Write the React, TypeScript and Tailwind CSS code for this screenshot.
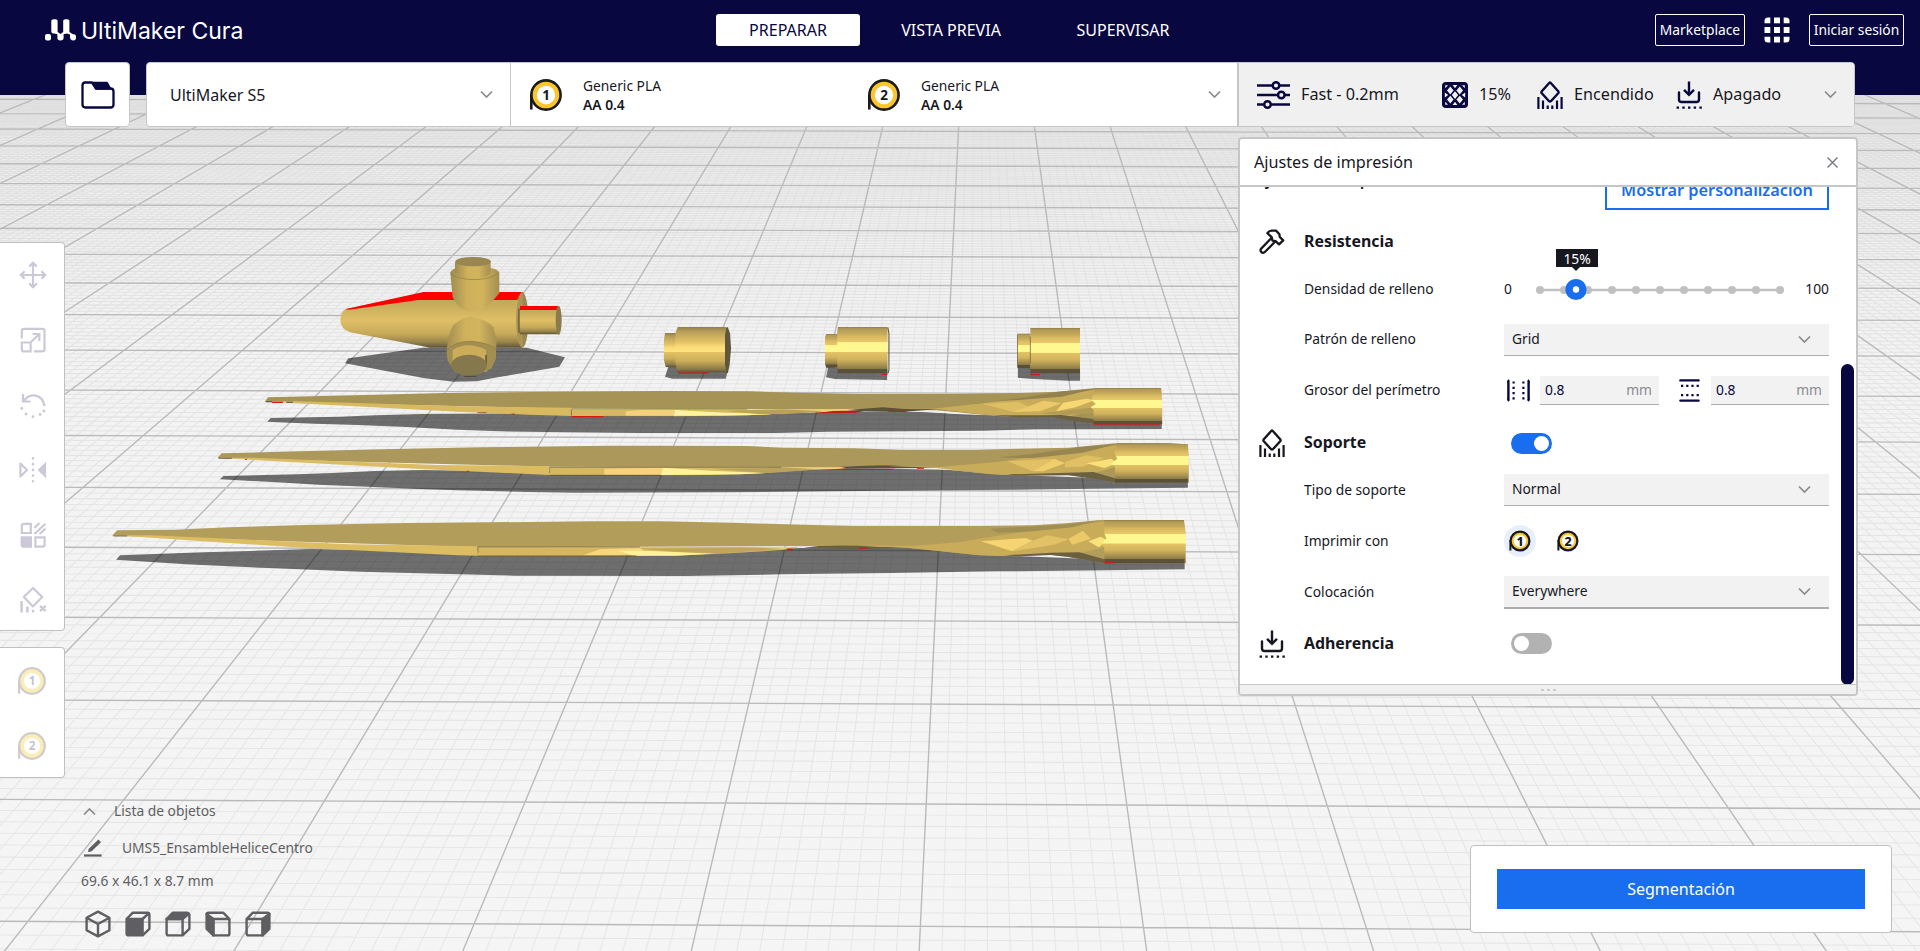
import type { ReactNode } from 'react';

/* ---------- Build plate ---------- */

const HORIZON = -285;

function platePoint(col: number, row: number): [number, number] {
  const depth = 1 / (0.00082556 + 0.00009273 * row);
  const y0 = HORIZON + depth;
  const xc = 958.6 - 0.0478 * (y0 - 127);
  const x = xc + col * 0.1842 * depth;
  const y = y0 + (x - xc) * (0.0019 + 0.0000038 * y0);
  return [x, y];
}

function seg(a: [number, number], b: [number, number]) {
  return `M${a[0].toFixed(1)} ${a[1].toFixed(1)}L${b[0].toFixed(1)} ${b[1].toFixed(1)}`;
}

function gridPath(step: number, skipMajor: boolean) {
  const parts: string[] = [];
  const cols = Math.round(17 / step);
  for (let i = -cols; i <= cols; i++) {
    if (skipMajor && i % 10 === 0) continue;
    const c = i * step;
    parts.push(seg(platePoint(c, 20), platePoint(c, -0.5)));
  }
  const from = Math.round(-0.5 / step);
  const to = Math.round(20 / step);
  for (let j = from; j <= to; j++) {
    if (skipMajor && j % 10 === 0) continue;
    const r = j * step;
    parts.push(seg(platePoint(-17, r), platePoint(17, r)));
  }
  return parts.join('');
}

const minorGrid = gridPath(0.1, true);
const majorGrid = gridPath(1, false);

function Hub() {
  return (
    <g transform="translate(320 240) scale(.33333)">
      <path d="M75 370L85 355L310 323H620L735 352L718 380L640 394L520 414L470 424L400 425L310 414Z" fill="rgba(0,0,0,.55)" />
      <path d="M310 158H606V323H330L305 318L90 277Q62 268 61 240Q62 212 80 206Z" fill="url(#hubBody)" />
      <path d="M75 208L310 156H610L600 180H295L88 209Z" fill="#ff0000" />
      <ellipse cx="607" cy="240" rx="18" ry="83" fill="#9a8650" />
      <path d="M590 180Q600 156 608 156V323Q600 322 592 300Z" fill="#ccb05b" opacity=".35" />
      <path d="M598 205V275L600 283H717V198H600Z" fill="url(#hubBody)" />
      <path d="M600 198H714L710 210H600Z" fill="#ff0000" />
      <ellipse cx="716" cy="241" rx="9" ry="43" fill="#8b7a4b" />
      <path d="M597 205V278" stroke="#4d4630" strokeWidth="3" />
      <path d="M391 100L398 172Q420 214 455 214Q492 212 520 180L538 160V98Q530 85 510 84H410Q392 88 391 100Z" fill="url(#hubNeck)" />
      <path d="M391 98Q410 119 465 119Q520 117 536 96" fill="none" stroke="#8d7a48" strokeWidth="2" />
      <path d="M405 66V100Q425 116 462 116Q500 115 512 98V62Z" fill="url(#hubNeck)" />
      <ellipse cx="459" cy="65" rx="53" ry="14" fill="#9a8651" />
      <path d="M380 335Q383 285 400 255Q430 230 455 230Q500 238 520 262L530 300L527 350L500 395L420 395L385 360Z" fill="url(#hubNeck)" />
      <path d="M380 335Q400 303 455 304Q515 310 528 330V355L515 385L490 395L440 400L400 386L383 362Z" fill="#a38e52" />
      <path d="M380 335Q400 303 455 304Q515 310 528 330" fill="none" stroke="#8d7a48" strokeWidth="2" />
      <path d="M398 330Q445 302 498 330V378H398Z" fill="#cbad59" />
      <path d="M498 345V378" stroke="#554a2c" strokeWidth="4" />
      <ellipse cx="447" cy="376" rx="54" ry="32" fill="#85784c" />
      <path d="M432 409H470" stroke="#4d4630" strokeWidth="3" />
    </g>
  );
}

function Caps() {
  return (
    <g>
      <g fill="rgba(0,0,0,.55)">
        <path d="M80 198L70 230L90 236H240L245 215Z" />
        <path d="M527 200L521 232L545 237L692 240V218Z" />
        <path d="M1058 200V233L1090 236L1200 242H1232V215Z" />
      </g>
      <path d="M70 99H104V201H72L67 180V120Z" fill="url(#rodSoft)" />
      <path d="M106 81H240L246 90V217H106L99 190V100Z" fill="url(#rodSoft)" />
      <path d="M242 82H246L252 100L255 145L251 195L246 219H242L238 195V105Z" fill="#5f563b" />
      <path d="M107 219H193" stroke="#c81f1f" strokeWidth="4" />
      <path d="M521 102H555V203H521L518 190V112Z" fill="url(#rod)" />
      <path d="M554 81H693V220H554L552 190V100Z" fill="url(#rod)" />
      <path d="M694 83L697 100V210L694 220" fill="none" stroke="#5f563b" strokeWidth="3" />
      <path d="M676 223H693" stroke="#c81f1f" strokeWidth="4" />
      <path d="M1057 101H1094V204H1057Z" fill="url(#rod)" />
      <path d="M1093 84H1232V220H1093Z" fill="url(#rod)" />
      <path d="M1057 104V202M1093 110V190" stroke="#5f563b" strokeWidth="2" />
      <path d="M1093 224H1120" stroke="#c81f1f" strokeWidth="4" />
    </g>
  );
}

function Blades() {
  return (
    <g transform="translate(640 300) scale(.357143 .333333)">
      <Caps />
      <g fill="rgba(0,0,0,.55)">
        <path d="M-1044 365L-1034 354L-842 350L-742 346L-612 342L-312 340L370 340L700 334L800 335L870 341L950 345L1200 350L1461 370V387L1110 388L960 392L530 395L380 399H0L-262 396L-392 394L-512 389L-652 381L-792 375L-912 371Z" />
        <path d="M-1176 538L-1166 528L-962 523L-862 519L-742 513L-612 510L-255 515L400 514L560 504L860 509L1000 523L1300 535L1534 545V563L1400 565L1150 568L840 571L550 574L245 577L-182 578L-312 576L-512 571L-632 566L-762 560L-902 554L-992 548Z" />
        <path d="M-1467 779L-1456 766L-1222 757L-1092 753L-922 747L-500 755H200L500 742H760L950 764L1525 788V808L1300 811L1000 814L700 819L400 823L130 828L-352 827L-562 821L-782 815L-1022 805L-1272 793Z" />
      </g>

      {/* blade 1 */}
      <path d="M-1050 305L-1042 292L-799 286L-550 279L-234 275L56 273L305 274L430 278L620 282H870L1060 279L1170 275L1275 264H1459L1462 373H1270L1200 358L1150 350L1060 352L1000 348L930 341L830 331L730 328L600 328L480 328L-192 326Z" fill="#a69356" />
      <path d="M-1050 304L-972 303L-500 319L-192 323V348L-312 344L-512 335L-812 318L-972 309Z" fill="#d8b95f" />
      <path d="M-192 329H300L370 344L215 348H-192Z" fill="#d6b85f" />
      <path d="M-40 334L0 330H98L94 348H-40Z" fill="#f5d177" />
      <path d="M98 330L240 338L370 342L300 346L94 349Z" fill="#fff3a0" />
      <path d="M240 332L400 328L560 328L500 336L400 343L330 342Z" fill="#b9a159" />
      <path d="M400 328H560L600 326L570 334H520Z" fill="#f6cf77" />
      <path d="M480 340L540 333L640 331L600 339Z" fill="#c01c1c" />
      <path d="M580 330L680 322L740 327L830 328L740 335L620 334Z" fill="#5b523a" />
      <path d="M695 334H745" stroke="#c01c1c" strokeWidth="3" />
      <path d="M745 334L830 332L930 341L850 339Z" fill="#f1f1ee" />
      <path d="M690 322L820 326L960 310L1060 296L1275 270V330L1200 350L1060 350L1000 347L930 340L840 328Z" fill="#c9ac5a" />
      <path d="M990 304L1080 292L1170 275L1275 266L1180 290L1060 300Z" fill="#93824d" />
      <path d="M960 312L1060 305L1105 330L1045 336Z" fill="#dfbf63" />
      <path d="M1045 336L1130 302L1180 310L1120 334Z" fill="#ecc96a" />
      <path d="M1185 308L1250 296L1275 300L1220 322L1165 334Z" fill="#f6d772" />
      <path d="M1120 340L1275 322V340L1180 346Z" fill="#b49b55" />
      <path d="M990 346L1120 346L1180 345L1275 358V373L1200 360L1150 351L1060 353Z" fill="#6b6040" />
      <path d="M1275 264H1459L1462 300V373H1270V330L1262 322L1276 312L1264 300Z" fill="url(#rod)" />
      <path d="M1270 374H1456" stroke="#c81f1f" strokeWidth="3" />
      <path d="M-1048 305H-1030M-990 307H-972" stroke="#444" strokeWidth="3" />
      <path d="M-1030 307H-1000M-192 350H-102" stroke="#e0140f" strokeWidth="4" />
      <path d="M-455 338H-430M-360 342H-350" stroke="#a3241c" strokeWidth="2" />
      <path d="M-192 328V346" stroke="#6a5c34" strokeWidth="2" />
      <path d="M-192 328H300M-102 349H220" stroke="#7d6d3f" strokeWidth="1.5" />

      {/* blade 2 */}
      <path d="M-1183 474L-1172 460L-952 454L-725 448L-442 442L-88 437H56L300 438L400 443L600 445L730 449H940L1060 446L1200 443L1330 430H1472L1534 433L1537 548H1330L1270 535L1200 525L1050 526L980 523L900 514L820 503H395L-255 500Z" fill="#ab985a" />
      <path d="M-1183 473L-1080 473L-572 495L-255 498V525L-312 522L-612 507L-912 490L-1110 478Z" fill="#dbbc61" />
      <path d="M-253 502H200L395 504L470 510L300 522L200 525L-255 526Z" fill="#d6b85f" />
      <path d="M-100 506L64 503L58 525H-100Z" fill="#f8d27a" />
      <path d="M64 503L200 512L355 519L280 523L58 525Z" fill="#fff29c" />
      <path d="M200 506L395 503L560 502L470 511L360 519Z" fill="#baa25a" />
      <path d="M395 502H560L600 498L560 508L500 508Z" fill="#f3d176" />
      <path d="M515 509L560 506L715 506L700 510Z" fill="#c01c1c" />
      <path d="M560 500L690 495L760 500L840 503L720 505H580Z" fill="#5b523a" />
      <path d="M775 504H795" stroke="#d01c1c" strokeWidth="5" />
      <path d="M800 505L850 503L895 511L860 509Z" fill="#f1f1ee" />
      <path d="M640 496L840 501L1000 486L1120 468L1335 436V500L1270 520L1200 524L1050 526L980 522L900 512L820 503Z" fill="#c9ac5a" />
      <path d="M1000 472L1100 462L1230 442L1335 432L1240 458L1100 474Z" fill="#988650" />
      <path d="M1030 484L1160 476L1100 514Z" fill="#e2c166" />
      <path d="M1160 476L1190 490L1130 514L1100 514Z" fill="#f0cd6d" />
      <path d="M1190 486L1250 466L1300 474L1240 500L1190 502Z" fill="#e0c063" />
      <path d="M1250 490L1320 476L1335 490L1300 504Z" fill="#fbe07a" />
      <path d="M1030 523L1150 520L1270 516L1335 536V548L1270 536L1200 526L1050 527Z" fill="#6b6040" />
      <path d="M1335 430H1472L1534 433L1537 470L1534 548H1330V500L1318 492L1336 476L1328 456Z" fill="url(#rod)" />
      <path d="M-1180 475H-1143M-253 526H60" stroke="#5c5238" strokeWidth="2.5" />
      <path d="M-1106 478H-1100M-486 514H-478" stroke="#b3241c" strokeWidth="2.5" />
      <path d="M-253 502V518M-253 502H395" stroke="#6a5c34" strokeWidth="1.8" fill="none" />

      {/* blade 3 */}
      <path d="M-1478 707L-1464 691L-1302 689L-1152 682L-942 675L-652 669L-427 667L-132 664H56L260 668L380 672L600 678H940L1100 676L1190 670L1290 660H1523L1529 790H1300L1200 770L1150 764L1060 768L950 766L870 757L750 744L650 738L-454 742Z" fill="#b29d5b" />
      <path d="M-1478 706L-1370 706L-812 733L-454 739V767L-512 766L-712 755L-942 743L-1182 727L-1440 708Z" fill="#ddbd61" />
      <path d="M-454 742H0L290 741L450 741L400 750L250 760L100 767L-132 768H-454Z" fill="#d6b75f" />
      <path d="M-112 748L0 744L20 760L-60 766H-160Z" fill="#f8d67c" />
      <path d="M-60 752L20 752L205 761L100 767H-20Z" fill="#fff09a" />
      <path d="M0 746L290 743L420 741L340 752L220 760L100 755Z" fill="#bea65c" />
      <path d="M290 741H440L400 746Z" fill="#f3cd74" />
      <path d="M460 743L500 738L610 736L680 740L750 743L610 748Z" fill="#68603f" />
      <path d="M412 748H428M614 744H637" stroke="#d01c1c" strokeWidth="5" />
      <path d="M560 736L760 738L900 726L960 714L1060 698L1180 680L1305 664V740L1220 762L1150 764L1060 768L950 766L870 757L750 743Z" fill="#c9ac5a" />
      <path d="M980 686L1190 674L1290 661L1210 682L1100 694L1000 698Z" fill="#a18e53" />
      <path d="M955 724L1080 714L1100 722L1042 754Z" fill="#f5d471" />
      <path d="M1100 722L1140 706L1200 718L1160 734L1042 754Z" fill="#e3c166" />
      <path d="M1200 716L1240 692L1262 716L1210 734Z" fill="#ecca6a" />
      <path d="M1255 724L1290 710L1308 720L1285 742Z" fill="#fae27d" />
      <path d="M1020 766L1150 758L1230 757L1300 778V790L1260 782L1200 771L1150 765L1060 769Z" fill="#6b6040" />
      <path d="M1300 660H1523L1529 705L1525 790H1300V742L1290 732L1306 716L1300 700Z" fill="url(#rod)" />
      <path d="M1300 788H1328" stroke="#d01c1c" strokeWidth="5" />
      <path d="M-1474 708H-1436M-454 768H-10" stroke="#6a5c34" strokeWidth="2.5" />
      <path d="M-454 740V758M-454 741H0" stroke="#6a5c34" strokeWidth="1.8" fill="none" />
    </g>
  );
}

function Scene() {
  return (
    <svg className="absolute inset-0 h-[951px] w-[1920px]" viewBox="0 0 1920 951" aria-hidden="true">
      <defs>
        <linearGradient id="floor" x1="0" y1="95" x2="0" y2="951" gradientUnits="userSpaceOnUse">
          <stop offset="0" stopColor="#ececec" />
          <stop offset=".3" stopColor="#f3f3f3" />
          <stop offset="1" stopColor="#f5f5f5" />
        </linearGradient>
        <linearGradient id="rod" x1="0" y1="0" x2="0" y2="1">
          <stop offset="0" stopColor="#8f7e4b" />
          <stop offset=".04" stopColor="#b29a56" />
          <stop offset=".14" stopColor="#c4a95a" />
          <stop offset=".22" stopColor="#dcbc62" />
          <stop offset=".33" stopColor="#eac96a" />
          <stop offset=".335" stopColor="#fff892" />
          <stop offset=".54" stopColor="#fff88f" />
          <stop offset=".545" stopColor="#e3c364" />
          <stop offset=".7" stopColor="#d2b45d" />
          <stop offset=".8" stopColor="#b09853" />
          <stop offset=".9" stopColor="#8b7a47" />
          <stop offset=".91" stopColor="#5c5339" />
          <stop offset="1" stopColor="#564e36" />
        </linearGradient>
        <linearGradient id="rodSoft" x1="0" y1="0" x2="0" y2="1">
          <stop offset="0" stopColor="#8f7e4b" />
          <stop offset=".1" stopColor="#b79e58" />
          <stop offset=".33" stopColor="#e3c166" />
          <stop offset=".42" stopColor="#fbd876" />
          <stop offset=".55" stopColor="#ffe57d" />
          <stop offset=".56" stopColor="#e3c265" />
          <stop offset=".75" stopColor="#cbae5a" />
          <stop offset=".93" stopColor="#8b7a47" />
          <stop offset="1" stopColor="#5c5339" />
        </linearGradient>
        <linearGradient id="hubBody" x1="0" y1="0" x2="0" y2="1">
          <stop offset="0" stopColor="#b8a05a" />
          <stop offset=".25" stopColor="#c9ae5c" />
          <stop offset=".5" stopColor="#e0c067" />
          <stop offset=".75" stopColor="#c6aa5a" />
          <stop offset=".9" stopColor="#97834b" />
          <stop offset="1" stopColor="#5c5339" />
        </linearGradient>
        <linearGradient id="hubNeck" x1="0" y1="0" x2="1" y2="0">
          <stop offset="0" stopColor="#a08c51" />
          <stop offset=".35" stopColor="#cfb15c" />
          <stop offset=".65" stopColor="#d2b45d" />
          <stop offset="1" stopColor="#a58f51" />
        </linearGradient>
      </defs>
      <rect width="1920" height="951" fill="url(#floor)" />
      <path d={minorGrid} stroke="#000" strokeOpacity=".06" strokeWidth="1.1" fill="none" />
      <path d={majorGrid} stroke="#bababa" strokeWidth="1.4" fill="none" />
      <rect width="1920" height="95" fill="#08073f" />
      <Hub />
      <Blades />
    </svg>
  );
}

/* ---------- Icons ---------- */

function Chevron({ className = '', up = false }: { className?: string; up?: boolean }) {
  return (
    <svg className={`h-[9px] w-[13px] shrink-0 ${className}`} viewBox="0 0 13 9" fill="none" stroke="#8b8b90" strokeWidth="1.7">
      <path d={up ? 'M1 7.5L6.5 2L12 7.5' : 'M1 1.5L6.5 7L12 1.5'} />
    </svg>
  );
}

function Spool({ n, className, faded = false }: { n: string; className: string; faded?: boolean }) {
  const ring = faded ? '#d0cccd' : '#1c1b1b';
  return (
    <svg className={`shrink-0 ${className}`} viewBox="0 0 32 32">
      <path d="M1.3 15V30.5" stroke={ring} strokeWidth="2.6" />
      <circle cx="16" cy="16" r="14.6" fill={faded ? '#fbedb8' : '#fbc52c'} stroke={ring} strokeWidth="2.6" />
      <circle cx="16" cy="16" r="9.2" fill="#fff" />
      <text
        x="16"
        y="20.8"
        textAnchor="middle"
        fontFamily="'Noto Sans', sans-serif"
        fontSize="13.5"
        fontWeight="700"
        fill={faded ? '#c4c4d0' : '#17171f'}
      >
        {n}
      </text>
    </svg>
  );
}

function SmallSpool({ n }: { n: string }) {
  return (
    <svg className="h-[22px] w-[22px]" viewBox="0 0 22 22">
      <path d="M1.4 10V20.5" stroke="#17171f" strokeWidth="2" />
      <circle cx="11" cy="11" r="9.4" fill="#fbc52c" stroke="#17171f" strokeWidth="2.2" />
      <circle cx="11" cy="11" r="6.2" fill="#fff" />
      <text x="11" y="15.6" textAnchor="middle" fontFamily="'Noto Sans', sans-serif" fontSize="12.5" fontWeight="800" fill="#17171f">
        {n}
      </text>
    </svg>
  );
}

function SupportIcon({ className }: { className: string }) {
  return (
    <svg className={`shrink-0 ${className}`} viewBox="0 0 26 28" fill="none" stroke="currentColor" strokeWidth="2.4">
      <path d="M12.2 2Q13 1.2 13.8 2L21.2 10.2Q22 11.2 21.2 12.2L13.9 20.2Q13 21 12.1 20.2L4.8 12.2Q4 11.2 4.8 10.2Z" strokeLinejoin="round" />
      <path d="M1.4 16V28M6 19.5V28M10.7 24.5V28M15.3 24.5V28M20 19.5V28M24.6 16V28" strokeWidth="2.2" />
    </svg>
  );
}

function AdhesionIcon({ className }: { className: string }) {
  return (
    <svg className={`shrink-0 ${className}`} viewBox="0 0 26 28" fill="none" stroke="currentColor" strokeWidth="2.4">
      <path d="M13 .5V13.5M8 8.8L13 13.8L18 8.8" />
      <path d="M3 11.5V18.5Q3 21 5.5 21H20.5Q23 21 23 18.5V11.5" strokeLinecap="round" />
      <path d="M.6 26.6H26" strokeWidth="2.3" strokeDasharray="2.4 3.3" />
    </svg>
  );
}

function HammerIcon() {
  return (
    <svg className="h-[26px] w-[26px]" viewBox="0 0 26 26" fill="none" stroke="#17171f" strokeWidth="2.3" strokeLinejoin="round" strokeLinecap="round">
      <path d="M12.2 9.2L2.2 19.6Q.9 21.2 2.2 22.9Q3.8 24.6 5.6 23.2L16 12.8" />
      <path d="M8.4 4.2Q9.8 1.8 12.6 1.6H17L20.4 5.2L20.8 8L24.2 11.4L20 15.4L16.6 12.2L13.4 11.6L12.8 8.4L8.4 4.2Z" />
    </svg>
  );
}

function FolderIcon() {
  return (
    <svg className="h-[28px] w-[34px]" viewBox="0 0 34 28" fill="none" stroke="#08073f" strokeWidth="2.3" strokeLinejoin="round">
      <path d="M1.5 4.5Q1.5 1.5 4 1.5H11L15 7.5H29.5Q32.5 7.5 32.5 10.5V23.5Q32.5 26.5 29.5 26.5H4.5Q1.5 26.5 1.5 23.5Z" />
      <path d="M12 2H26L29 7.5H15Z" fill="#08073f" />
    </svg>
  );
}

function ProfileIcon() {
  return (
    <svg className="h-[28px] w-[33px] shrink-0" viewBox="0 0 33 28" fill="none" stroke="#08073f" strokeWidth="2.5">
      <path d="M0 4.5H15M23 4.5H33M0 14H20M28 14H33M0 23.5H6.5M14.5 23.5H33" />
      <circle cx="19" cy="4.5" r="3.3" />
      <circle cx="24.3" cy="14" r="3.3" />
      <circle cx="10.5" cy="23.5" r="3.3" />
    </svg>
  );
}

function InfillIcon() {
  return (
    <svg className="h-[26px] w-[26px] shrink-0" viewBox="0 0 26 26">
      <rect x="0" y="0" width="26" height="26" rx="4" fill="#08073f" />
      <g fill="#f0f0f0">
        <path d="M8.3 4.6L11.6 8.5L8.3 12.4L5 8.5ZM17.7 4.6L21 8.5L17.7 12.4L14.4 8.5ZM8.3 13.8L11.6 17.6L8.3 21.4L5 17.6ZM17.7 13.8L21 17.6L17.7 21.4L14.4 17.6ZM13 9.3L16.2 13.1L13 16.9L9.8 13.1Z" />
        <path d="M10.6 3H15.4L13 6.2ZM10.6 23H15.4L13 19.8ZM2.8 10.6V15.6L6.2 13.1ZM23.2 10.6V15.6L19.8 13.1ZM3.2 3.2H6L3.2 6.2ZM22.8 3.2H20L22.8 6.2ZM3.2 22.8H6L3.2 19.8ZM22.8 22.8H20L22.8 19.8Z" />
      </g>
    </svg>
  );
}

function LogoMark() {
  return (
    <svg className="h-[22px] w-[31px]" viewBox="0 0 31 22" fill="#fff">
      <rect x="0" y="15" width="6" height="6.4" rx="2" />
      <path d="M6.3 1.8Q6.3 .2 8.6 .2H10.4Q12.6 .2 12.6 1.8V13L15.5 15L18.2 13V1.8Q18.2 .2 20.4 .2H22.2Q24.4 .2 24.4 1.8V13L27.5 15Q31 15 31 17.5V19Q31 21.4 28.4 21.4Q25 21.4 25 18V15.4L22 14.6L18.6 15.2V19Q18.6 21.4 15.5 21.4Q12.4 21.4 12.4 19V15.2L9.4 14.6Q6.3 14.6 6.3 12Z" />
    </svg>
  );
}

function AppsIcon() {
  return (
    <svg className="h-[26px] w-[26px]" viewBox="0 0 26 26" fill="#fff">
      <path d="M4 .5H6.3V6.3H.5V4Q.5 .5 4 .5Z" />
      <rect x="10" y=".5" width="6" height="5.8" />
      <path d="M19.7 .5H22Q25.5 .5 25.5 4V6.3H19.7Z" />
      <rect x=".5" y="10" width="5.8" height="6" />
      <rect x="10" y="10" width="6" height="6" />
      <rect x="19.7" y="10" width="5.8" height="6" />
      <path d="M.5 19.7H6.3V25.5H4Q.5 25.5 .5 22Z" />
      <rect x="10" y="19.7" width="6" height="5.8" />
      <path d="M19.7 19.7H25.5V22Q25.5 25.5 22 25.5H19.7Z" />
    </svg>
  );
}

const toolIcons: ReactNode[] = [
  <g key="move">
    <path d="M14 2V26M2 14H26" />
    <path d="M10.2 5.6L14 1.8L17.8 5.6M10.2 22.4L14 26.2L17.8 22.4M5.6 10.2L1.8 14L5.6 17.8M22.4 10.2L26.2 14L22.4 17.8" />
  </g>,
  <g key="scale">
    <path d="M2.8 12.5V5Q2.8 2.8 5 2.8H23.3Q25.5 2.8 25.5 5V23.2Q25.5 25.4 23.3 25.4H15" />
    <path d="M2.8 16.5H11.6V25.4H5Q2.8 25.4 2.8 23.2ZM11.6 16.5L20 8.2M13.5 8H20.4V15" />
  </g>,
  <g key="rotate">
    <path d="M4 3V10.5H11.5M4.6 10Q9 4 15.5 4.4Q24 5.6 25.6 15" />
    <path d="M2.8 17.4V17.5M7 23V23.1M14 25.6V25.7M21 23.4V23.5M25 20V20.1" strokeLinecap="round" strokeWidth="2.8" />
  </g>,
  <g key="mirror">
    <path d="M1.4 7.5L8 14L1.4 20.5Z" strokeLinejoin="round" />
    <path d="M27 5.8V22.2L18.6 14Z" fill="#ccc8d8" stroke="none" />
    <path d="M14 2.4V26" strokeWidth="2.6" strokeLinecap="round" strokeDasharray=".1 5.6" />
  </g>,
  <g key="per-model">
    <path d="M2.8 12V5Q2.8 2.8 5 2.8H11.8V12ZM16.4 16.4H25.6V23.4Q25.6 25.6 23.4 25.6H16.4Z" />
    <path d="M1.6 15.2H13V26.8H4.4Q1.6 26.8 1.6 24Z" fill="#ccc8d8" stroke="none" />
    <path d="M15.4 7L20.4 2M15.4 13L26.4 2.8M20.6 13L26.4 7.6" />
  </g>,
  <g key="blocker">
    <path d="M14 2L23.2 11L14 20.4L4.8 11Z" strokeLinejoin="round" />
    <path d="M2.6 15V26.4M8.4 20.6V26.4M14 23.8V26.4M21 19.8L26.6 25.2M26.6 19.8L21 25.2" strokeWidth="2.5" />
  </g>,
];

/* ---------- Panel pieces ---------- */

function Row({ h, icon, label, strong = false, children }: { h: string; icon?: ReactNode; label: string; strong?: boolean; children: ReactNode }) {
  return (
    <div className={`grid grid-cols-[45px_200px_325px] items-center pl-[20px] ${h}`}>
      <div>{icon}</div>
      <div className={strong ? 'text-[15.9px] font-bold' : 'text-[13.8px]'}>{label}</div>
      {children}
    </div>
  );
}

function Select({ value }: { value: string }) {
  return (
    <div className="flex h-[32px] items-center justify-between border-b border-[#adadb0] bg-[#f2f2f2] pl-2 pr-[18px] text-[13.8px]">
      {value}
      <Chevron />
    </div>
  );
}

function NumberField({ w }: { w: string }) {
  return (
    <div className={`flex h-[29px] items-center justify-between border-b border-[#adadb0] bg-[#f2f2f2] pl-[5px] pr-[7px] text-[13.8px] ${w}`}>
      <span className="text-[#08073f]">0.8</span>
      <span className="text-[#8b8b90]">mm</span>
    </div>
  );
}

function Toggle({ on }: { on: boolean }) {
  return (
    <div className={`ml-[7px] flex h-[21px] w-[41px] items-center rounded-full px-[3px] ${on ? 'justify-end bg-[#196ef0]' : 'justify-start bg-[#b2b2b2]'}`}>
      <div className="h-[15px] w-[15px] rounded-full bg-white" />
    </div>
  );
}

function DensitySlider() {
  return (
    <div className="flex items-center justify-between text-[13.8px]">
      <span>0</span>
      <svg className="-mt-[46px] -mb-[14px] ml-[2px] h-[60px] w-[260px] overflow-visible" viewBox="0 0 260 60">
        <path d="M10 46H250" stroke="#c0c0c2" strokeWidth="2.5" />
        {Array.from({ length: 11 }, (_, i) => (
          <circle key={i} cx={10 + i * 24} cy="46" r="4" fill="#c0c0c2" />
        ))}
        <circle cx="46" cy="45.5" r="10.6" fill="#196ef0" />
        <circle cx="46" cy="45.5" r="3.2" fill="#fff" />
        <path d="M26 5H68V23H50L46 27L42 23H26Z" fill="#17171f" />
        <text x="47" y="19.5" textAnchor="middle" fontFamily="'Noto Sans', sans-serif" fontSize="13.8" fill="#fff">
          15%
        </text>
      </svg>
      <span>100</span>
    </div>
  );
}

function SettingsPanel() {
  return (
    <section className="flex h-[559px] w-[620px] flex-col overflow-hidden rounded-[4px] border-2 border-[#c6c6c8] bg-white">
      <div className="flex h-[48px] shrink-0 items-center justify-between border-b-2 border-[#c6c6c8] pl-[14px] pr-[18px] text-[16.2px]">
        Ajustes de impresión
        <svg className="h-[11px] w-[11px]" viewBox="0 0 11 11" stroke="#77777c" strokeWidth="1.4">
          <path d="M.5 .5L10.5 10.5M10.5 .5L.5 10.5" />
        </svg>
      </div>
      <div className="flex min-h-0 flex-1">
        <div className="-ml-px w-[590px] shrink-0 overflow-hidden">
          <div className="flex h-[33px] items-start justify-between pl-[16px]">
            <span className="-mt-[20px] text-[16px] font-semibold">Ajustes de impresión</span>
            <div className="-mt-[16px] flex h-[39px] w-[224px] items-center justify-center border-2 border-[#196ef0] text-[16.3px] font-semibold text-[#196ef0]">
              Mostrar personalización
            </div>
          </div>
          <Row h="h-[44px]" label="Resistencia" strong icon={<HammerIcon />}>
            <span />
          </Row>
          <Row h="h-[51px]" label="Densidad de relleno">
            <DensitySlider />
          </Row>
          <Row h="h-[49px]" label="Patrón de relleno">
            <Select value="Grid" />
          </Row>
          <Row h="h-[53px]" label="Grosor del perímetro">
            <div className="flex items-center">
              <svg className="ml-[3px] mr-[10px] h-[23px] w-[23px]" viewBox="0 0 23 23" fill="none" stroke="#08073f" strokeWidth="2.4">
                <path d="M2.2 1.2Q.8 2.4 1.4 4V19Q.8 20.6 2.2 21.8M20.8 1.2Q22.2 2.4 21.6 4V19Q22.2 20.6 20.8 21.8" />
                <path d="M6.6 2.4V21M16.4 2.4V21" strokeWidth="2.2" strokeDasharray="2.2 3.1" />
              </svg>
              <NumberField w="w-[119px]" />
              <svg className="ml-[20px] mr-[11px] h-[23px] w-[21px]" viewBox="0 0 21 23" fill="none" stroke="#08073f" strokeWidth="2.4">
                <path d="M1.4 1.4H19.6M1.4 21.6H19.6" strokeLinecap="round" />
                <path d="M2 6.8H20M2 16.2H20" strokeWidth="2.2" strokeDasharray="2.2 3" />
              </svg>
              <NumberField w="w-[118px]" />
            </div>
          </Row>
          <Row h="h-[52px]" label="Soporte" strong icon={<SupportIcon className="h-[28px] w-[26px]" />}>
            <Toggle on />
          </Row>
          <Row h="h-[42px]" label="Tipo de soporte">
            <Select value="Normal" />
          </Row>
          <Row h="h-[60px]" label="Imprimir con">
            <div className="flex items-center gap-[16px]">
              <div className="flex h-8 w-8 items-center justify-center rounded-full bg-[#e6effb]">
                <SmallSpool n="1" />
              </div>
              <div className="flex h-8 w-8 items-center justify-center">
                <SmallSpool n="2" />
              </div>
            </div>
          </Row>
          <Row h="h-[42px]" label="Colocación">
            <div className="border-b border-[#adadb0]">
              <Select value="Everywhere" />
            </div>
          </Row>
          <Row h="h-[61px]" label="Adherencia" strong icon={<AdhesionIcon className="h-[28px] w-[26px]" />}>
            <Toggle on={false} />
          </Row>
        </div>
        <div className="ml-[12px] mt-[177px] h-[321px] w-[13px] rounded-full bg-[#08073f]" />
      </div>
      <div className="flex h-[10px] shrink-0 items-center justify-center gap-[3px] border-t border-[#c6c6c8] bg-[#f0f0f0]">
        <span className="h-[2px] w-[3px] rounded-full bg-[#c6c6c8]" />
        <span className="h-[2px] w-[3px] rounded-full bg-[#c6c6c8]" />
        <span className="h-[2px] w-[3px] rounded-full bg-[#c6c6c8]" />
      </div>
    </section>
  );
}

function Header() {
  return (
    <header className="flex h-[62px] shrink-0 pt-[14px] text-white">
      <div className="flex h-[32px] w-[716px] shrink-0 items-center pl-[45px]">
        <LogoMark />
        <span className="ml-[5px] mt-[2px] font-[Inter] text-[23px]">UltiMaker Cura</span>
      </div>
      <nav className="flex h-[32px] text-[16px]">
        <div className="flex w-[144px] items-center justify-center rounded-[3px] bg-white text-[#08073f]">PREPARAR</div>
        <div className="ml-[19px] flex w-[144px] items-center justify-center">VISTA PREVIA</div>
        <div className="ml-[28px] flex w-[144px] items-center justify-center">SUPERVISAR</div>
      </nav>
      <div className="ml-auto mr-[16px] flex h-[32px] items-center text-[13.8px]">
        <div className="flex h-[32px] w-[90px] items-center justify-center rounded-[2px] border border-white">Marketplace</div>
        <div className="mx-[19px]">
          <AppsIcon />
        </div>
        <div className="flex h-[32px] w-[95px] items-center justify-center rounded-[2px] border border-white">Iniciar sesión</div>
      </div>
    </header>
  );
}

function ExtruderInfo({ n }: { n: string }) {
  return (
    <div className="flex w-[338px] items-center">
      <Spool n={n} className="h-[32px] w-[32px]" />
      <div className="ml-[21px] text-[13.8px] leading-[19px]">
        <div>Generic PLA</div>
        <div className="font-semibold">AA 0.4</div>
      </div>
    </div>
  );
}

function StageBar() {
  return (
    <div className="flex h-[65px] shrink-0 pl-[65px]">
      <div className="flex w-[65px] items-center justify-center rounded-[4px] border border-[#c6c6c8] bg-white">
        <FolderIcon />
      </div>
      <div className="ml-[16px] flex w-[1709px] overflow-hidden rounded-[4px] border border-[#c6c6c8] bg-white">
        <div className="flex w-[364px] items-center justify-between border-r border-[#c6c6c8] pl-[23px] pr-[17px] text-[16px]">
          UltiMaker S5
          <Chevron />
        </div>
        <div className="flex w-[728px] items-center border-r-2 border-[#c6c6c8] pl-[19px]">
          <ExtruderInfo n="1" />
          <ExtruderInfo n="2" />
          <Chevron className="ml-[2px]" />
        </div>
        <div className="flex flex-1 items-center bg-[#f0f0f0] pl-[18px] text-[16.2px] text-[#08073f]">
          <ProfileIcon />
          <span className="ml-[11px] w-[141px] text-[#17171f]">Fast - 0.2mm</span>
          <InfillIcon />
          <span className="ml-[11px] w-[58px] text-[#17171f]">15%</span>
          <SupportIcon className="h-[28px] w-[26px]" />
          <span className="ml-[11px] w-[102px] text-[#17171f]">Encendido</span>
          <AdhesionIcon className="h-[28px] w-[26px]" />
          <span className="ml-[11px] w-[111px] text-[#17171f]">Apagado</span>
          <Chevron />
        </div>
      </div>
    </div>
  );
}

function ViewIcons() {
  return (
    <div className="flex gap-[12px]">
      <svg className="h-[28px] w-[28px]" viewBox="0 0 28 28" fill="none" stroke="#5f5f63" strokeWidth="2.4" strokeLinejoin="round">
        <path d="M14 1.6L25.4 7.8V20.2L14 26.4L2.6 20.2V7.8ZM2.6 7.8L14 14L25.4 7.8M14 14V26.4" />
      </svg>
      <svg className="h-[28px] w-[28px]" viewBox="0 0 28 28" fill="none" stroke="#5f5f63" strokeWidth="2.4" strokeLinejoin="round">
        <path d="M2.6 9H18.6V25.4H4.6Q2.6 25.4 2.6 23.4Z" fill="#5f5f63" />
        <path d="M2.6 9L8.6 2.8H23.4Q25.4 2.8 25.4 4.8V18.8L18.6 25.4M18.6 9L25 3.2" />
      </svg>
      <svg className="h-[28px] w-[28px]" viewBox="0 0 28 28" fill="none" stroke="#5f5f63" strokeWidth="2.4" strokeLinejoin="round">
        <path d="M2.6 9L8.6 2.8H23.4L25 3.6L18.6 9Z" fill="#5f5f63" />
        <path d="M2.6 9H18.6V25.4H4.6Q2.6 25.4 2.6 23.4ZM25.4 4V18.8L18.6 25.4" />
      </svg>
      <svg className="h-[28px] w-[28px]" viewBox="0 0 28 28" fill="none" stroke="#5f5f63" strokeWidth="2.4" strokeLinejoin="round">
        <path d="M2.6 4L9.4 9V25.4L2.6 18.8Z" fill="#5f5f63" />
        <path d="M9.4 9H25.4V23.4Q25.4 25.4 23.4 25.4H9.4ZM2.6 4.6Q2.6 2.8 4.6 2.8H19.4L25.4 9" />
      </svg>
      <svg className="h-[28px] w-[28px]" viewBox="0 0 28 28" fill="none" stroke="#5f5f63" strokeWidth="2.4" strokeLinejoin="round">
        <path d="M25.4 4L18.6 9V25.4L25.4 18.8Z" fill="#5f5f63" />
        <path d="M2.6 9H18.6V25.4H4.6Q2.6 25.4 2.6 23.4ZM2.6 9L8.6 2.8H23.4Q25.4 2.8 25.4 4.6" />
      </svg>
    </div>
  );
}

export default function App() {
  return (
    <div className="relative flex h-[951px] w-[1920px] flex-col overflow-hidden bg-[#f4f4f4] font-['Noto_Sans',sans-serif] text-[#17171f]">
      <Scene />
      <div className="relative flex h-full flex-col">
        <Header />
        <StageBar />
        <main className="flex min-h-0 flex-1 justify-between">
          <div className="flex flex-col pt-[115px]">
            <div className="flex h-[389px] w-[65px] flex-col items-center rounded-r-[4px] border border-l-0 border-[#c0c0c4] bg-white pt-[18px]">
              {toolIcons.map((icon, i) => (
                <svg key={i} className="mb-[37px] ml-[1px] h-[28px] w-[28px] shrink-0" viewBox="0 0 28 28" fill="none" stroke="#ccc8d8" strokeWidth="2.2">
                  {icon}
                </svg>
              ))}
            </div>
            <div className="mt-[16px] flex h-[131px] w-[65px] flex-col items-center gap-[37px] rounded-r-[4px] border border-l-0 border-[#c0c0c4] bg-white pt-[19px]">
              <Spool n="1" faded className="h-[28px] w-[28px]" />
              <Spool n="2" faded className="h-[28px] w-[28px]" />
            </div>
            <div className="flex flex-col pl-[81px] pt-[23px] text-[13.8px] leading-[20px] text-[#5f5f63]">
              <div className="flex items-center">
                <Chevron up className="ml-[2px]" />
                <span className="ml-[18px]">Lista de objetos</span>
              </div>
              <div className="mt-[17px] flex items-center">
                <svg className="ml-[3px] h-[18px] w-[18px]" viewBox="0 0 18 18" fill="#5f5f63">
                  <path d="M14.4 .6L17 3.2L7.4 12.4L4 13L4.6 10Z" />
                  <path d="M0 15.4H17.6V17.6H0Z" />
                </svg>
                <span className="ml-[20px]">UMS5_EnsambleHeliceCentro</span>
              </div>
              <div className="mt-[13px]">69.6 x 46.1 x 8.7 mm</div>
              <div className="ml-[3px] mt-[19px]">
                <ViewIcons />
              </div>
            </div>
          </div>
          <div className="flex flex-col items-end justify-between pb-[18px] pt-[10px]">
            <div className="mr-[62px]">
              <SettingsPanel />
            </div>
            <div className="mr-[28px] flex h-[88px] w-[422px] items-center justify-center rounded-[4px] border border-[#c0c0c4] bg-white">
              <button className="h-[40px] w-[368px] bg-[#196ef0] text-[16px] text-white">Segmentación</button>
            </div>
          </div>
        </main>
      </div>
    </div>
  );
}
